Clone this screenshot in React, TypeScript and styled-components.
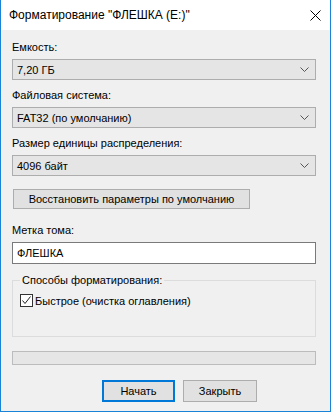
import React from 'react';
import styled, { createGlobalStyle } from 'styled-components';

const GlobalStyle = createGlobalStyle`
  html, body {
    margin: 0;
    padding: 0;
    background: #f0f0f0;
  }
  * {
    box-sizing: border-box;
  }
`;

const Window = styled.div`
  width: 331px;
  height: 412px;
  display: flex;
  flex-direction: column;
  background: #f0f0f0;
  border: 1px solid #1883d7;
  border-top: none;
  font-family: 'Liberation Sans', Arial, sans-serif;
  font-size: 11px;
  color: #000;
`;

const TitleBar = styled.div`
  height: 30px;
  flex-shrink: 0;
  display: flex;
  align-items: center;
  justify-content: space-between;
  background: #fff;
  padding: 0 9px 0 8px;
  font-size: 12px;
`;

const CloseButton = styled.div`
  width: 12px;
  height: 12px;
  display: flex;
  align-items: center;
  justify-content: center;
`;

const Body = styled.div`
  flex: 1;
  display: flex;
  flex-direction: column;
  padding: 10px 14px 0 11px;
`;

const Label = styled.div<{ $gap?: number }>`
  line-height: 15px;
  height: 15px;
  margin-top: ${({ $gap }) => $gap ?? 0}px;
  margin-bottom: 4px;
`;

const Select = styled.div`
  height: 21px;
  display: flex;
  align-items: center;
  justify-content: space-between;
  background: #e5e5e5;
  border: 1px solid #adadad;
  padding: 0 6px 0 4px;
`;

const Button = styled.div<{ $primary?: boolean; $width: number }>`
  width: ${({ $width }) => $width}px;
  height: 22px;
  display: flex;
  align-items: center;
  justify-content: center;
  background: #e1e1e1;
  border: ${({ $primary }) => ($primary ? '2px solid #0078d7' : '1px solid #adadad')};
`;

const ResetButton = styled(Button)`
  height: 20px;
  margin: 13px 0 0 1px;
`;

const TextInput = styled.div`
  height: 22px;
  display: flex;
  align-items: center;
  background: #fff;
  border: 1px solid #7a7a7a;
  padding: 0 4px;
`;

const GroupBox = styled.fieldset`
  margin: 9px 0 0;
  height: 64px;
  border: 1px solid #dcdcdc;
  padding: 7px 7px 0 7px;
  min-width: 0;
`;

const Legend = styled.legend`
  padding: 0 2px;
  margin-left: 0;
  line-height: 14px;
`;

const CheckRow = styled.label`
  display: flex;
  align-items: center;
  gap: 2px;
`;

const CheckBox = styled.div`
  width: 13px;
  height: 13px;
  border: 1px solid #333;
  background: #fff;
  display: flex;
  align-items: center;
  justify-content: center;
`;

const Progress = styled.div`
  height: 14px;
  margin-top: 14px;
  background: #e6e6e6;
  border: 1px solid #bcbcbc;
`;

const Footer = styled.div`
  display: flex;
  justify-content: flex-start;
  gap: 8px;
  margin-top: 15px;
  padding-left: 90px;
`;

function Chevron() {
  return (
    <svg width="9" height="5" viewBox="0 0 9 5">
      <polyline points="0.5,0.5 4.5,4.5 8.5,0.5" fill="none" stroke="#555" strokeWidth="1" />
    </svg>
  );
}

function Dropdown({ value }: { value: string }) {
  return (
    <Select>
      <span>{value}</span>
      <Chevron />
    </Select>
  );
}

export default function App() {
  return (
    <>
      <GlobalStyle />
      <Window>
        <TitleBar>
          <span>Форматирование "ФЛЕШКА (E:)"</span>
          <CloseButton>
            <svg width="11" height="11" viewBox="0 0 11 11">
              <path d="M0.5 0.5 L10.5 10.5 M10.5 0.5 L0.5 10.5" stroke="#000" strokeWidth="1" />
            </svg>
          </CloseButton>
        </TitleBar>
        <Body>
          <Label>Емкость:</Label>
          <Dropdown value="7,20 ГБ" />
          <Label $gap={8}>Файловая система:</Label>
          <Dropdown value="FAT32 (по умолчанию)" />
          <Label $gap={8}>Размер единицы распределения:</Label>
          <Dropdown value="4096 байт" />
          <ResetButton $width={237}>Восстановить параметры по умолчанию</ResetButton>
          <Label $gap={14}>Метка тома:</Label>
          <TextInput>ФЛЕШКА</TextInput>
          <GroupBox>
            <Legend>Способы форматирования:</Legend>
            <CheckRow>
              <CheckBox>
                <svg width="11" height="11" viewBox="0 0 11 11">
                  <polyline points="1.5,5.5 4,8.5 9.5,1.5" fill="none" stroke="#222" strokeWidth="1" />
                </svg>
              </CheckBox>
              <span>Быстрое (очистка оглавления)</span>
            </CheckRow>
          </GroupBox>
          <Progress />
          <Footer>
            <Button $primary $width={73}>Начать</Button>
            <Button $width={74}>Закрыть</Button>
          </Footer>
        </Body>
      </Window>
    </>
  );
}
